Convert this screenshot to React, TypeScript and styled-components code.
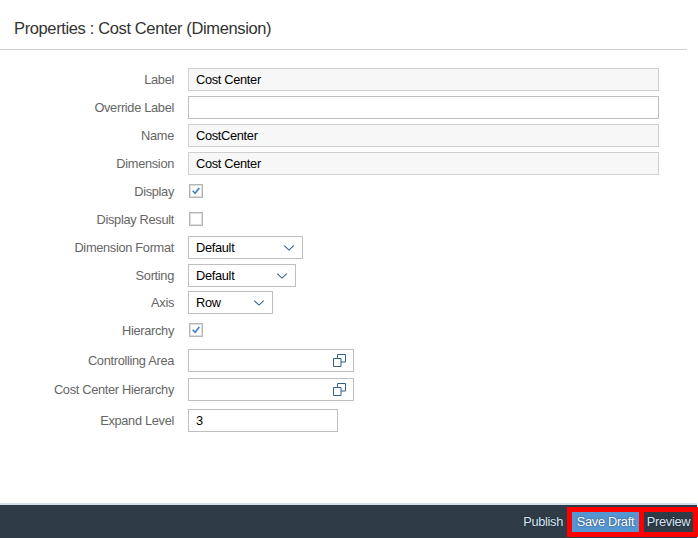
import React from "react";
import styled, { createGlobalStyle } from "styled-components";

const Global = createGlobalStyle`
  * { box-sizing: border-box; }
  body { margin: 0; background: #fff; font-family: "Liberation Sans", Arial, sans-serif; }
`;

const Page = styled.div`
  width: 698px;
  height: 538px;
  display: flex;
  flex-direction: column;
  overflow: hidden;
`;

const Header = styled.header`
  width: 687px;
  height: 50px;
  padding: 8px 0 0 14px;
  border-bottom: 1px solid #cfcfcf;
  display: flex;
  align-items: center;
`;

const Title = styled.h1`
  margin: 0;
  font-size: 16.5px;
  letter-spacing: -0.37px;
  font-weight: 400;
  color: #333;
  white-space: nowrap;
`;

const Form = styled.main`
  flex: 1;
  padding-top: 18px;
`;

const Row = styled.div<{ $gap?: number }>`
  display: grid;
  grid-template-columns: 174px 1fr;
  column-gap: 14px;
  align-items: center;
  height: 23px;
  margin-bottom: ${(p) => p.$gap ?? 5}px;
`;

const Label = styled.label`
  text-align: right;
  font-size: 12.8px;
  letter-spacing: -0.31px;
  line-height: 23px;
  color: #666;
  white-space: nowrap;
`;

const Field = styled.div<{ $width: number; $readOnly?: boolean }>`
  display: flex;
  align-items: center;
  justify-content: space-between;
  width: ${(p) => p.$width}px;
  height: 23px;
  padding: 0 7px;
  border: 1px solid ${(p) => (p.$readOnly ? "#d0d0d0" : "#bfbfbf")};
  background: ${(p) => (p.$readOnly ? "#f7f7f7" : "#fff")};
  font-size: 12.8px;
  letter-spacing: -0.31px;
  line-height: 21px;
  color: #000;
`;

const Box = styled.span`
  display: flex;
  align-items: center;
  justify-content: center;
  width: 14px;
  height: 14px;
  margin: -1px 0 0 1px;
  border: 1px solid #b5b5b5;
  box-shadow: inset 0 0 0 1px #dcdcdc;
`;

const Footer = styled.footer`
  width: 697px;
  height: 35px;
  border-top: 2px solid #d3dfec;
  background: #2f3c48;
  display: flex;
  justify-content: flex-end;
  align-items: flex-start;
  padding-top: 2px;
`;

const Action = styled.button<{ $primary?: boolean }>`
  height: 20px;
  margin: 5px 0;
  padding: 0;
  border: 0;
  font: 12.8px/20px "Liberation Sans", Arial, sans-serif;
  letter-spacing: -0.31px;
  color: ${(p) => (p.$primary ? "#fff" : "#d6e6f5")};
  background: ${(p) => (p.$primary ? "#5596d2" : "transparent")};
  text-shadow: 0 0 2px rgba(0, 0, 0, 0.6);
  white-space: nowrap;
`;

const Highlight = styled.div<{ $width: number }>`
  width: ${(p) => p.$width}px;
  height: 30px;
  border: 5px solid #f00;
  display: flex;
  flex: none;
  & + & { margin-left: -5px; margin-right: -1px; }
  & + & ${Action} { padding-left: 2px; }
  ${Action} { flex: 1; margin: 0; }
`;

const PublishSlot = styled.div`
  padding-right: 4px;
`;

const Tick = () => (
  <svg width="10" height="10" viewBox="0 0 10 10" fill="none">
    <path d="M1.7 4.8 4.1 7.3 8.3 2" stroke="#3b7fc0" strokeWidth="1.6" />
  </svg>
);

const Chevron = () => (
  <svg width="12" height="8" viewBox="0 0 12 8" fill="none">
    <path d="M1.3 1.7 6 6.1 10.7 1.7" stroke="#346187" strokeWidth="1.1" />
  </svg>
);

const ValueHelp = () => (
  <svg width="13" height="13" viewBox="0 0 13 13" fill="none" stroke="#346187">
    <path d="M.5 4.5h7.5v8H.5zM4.5 4.5v-4h8v7.5H8" />
  </svg>
);

const texts = [
  { label: "Label", value: "Cost Center", readOnly: true },
  { label: "Override Label", value: "", readOnly: false },
  { label: "Name", value: "CostCenter", readOnly: true },
  { label: "Dimension", value: "Cost Center", readOnly: true },
];

const selects = [
  { label: "Dimension Format", value: "Default", width: 115, gap: 5 },
  { label: "Sorting", value: "Default", width: 108, gap: 4 },
  { label: "Axis", value: "Row", width: 85, gap: 5 },
];

export default function App() {
  return (
    <Page>
      <Global />
      <Header>
        <Title>Properties : Cost Center (Dimension)</Title>
      </Header>
      <Form>
        {texts.map((t) => (
          <Row key={t.label}>
            <Label>{t.label}</Label>
            <Field $width={471} $readOnly={t.readOnly}>{t.value}</Field>
          </Row>
        ))}
        <Row>
          <Label>Display</Label>
          <Box><Tick /></Box>
        </Row>
        <Row>
          <Label>Display Result</Label>
          <Box />
        </Row>
        {selects.map((s) => (
          <Row key={s.label} $gap={s.gap}>
            <Label>{s.label}</Label>
            <Field $width={s.width}>{s.value}<Chevron /></Field>
          </Row>
        ))}
        <Row $gap={7}>
          <Label>Hierarchy</Label>
          <Box><Tick /></Box>
        </Row>
        <Row $gap={6}>
          <Label>Controlling Area</Label>
          <Field $width={166}><span /><ValueHelp /></Field>
        </Row>
        <Row $gap={8}>
          <Label>Cost Center Hierarchy</Label>
          <Field $width={166}><span /><ValueHelp /></Field>
        </Row>
        <Row>
          <Label>Expand Level</Label>
          <Field $width={150}>3</Field>
        </Row>
      </Form>
      <Footer>
        <PublishSlot><Action>Publish</Action></PublishSlot>
        <Highlight $width={77}><Action $primary>Save Draft</Action></Highlight>
        <Highlight $width={59}><Action>Preview</Action></Highlight>
      </Footer>
    </Page>
  );
}
